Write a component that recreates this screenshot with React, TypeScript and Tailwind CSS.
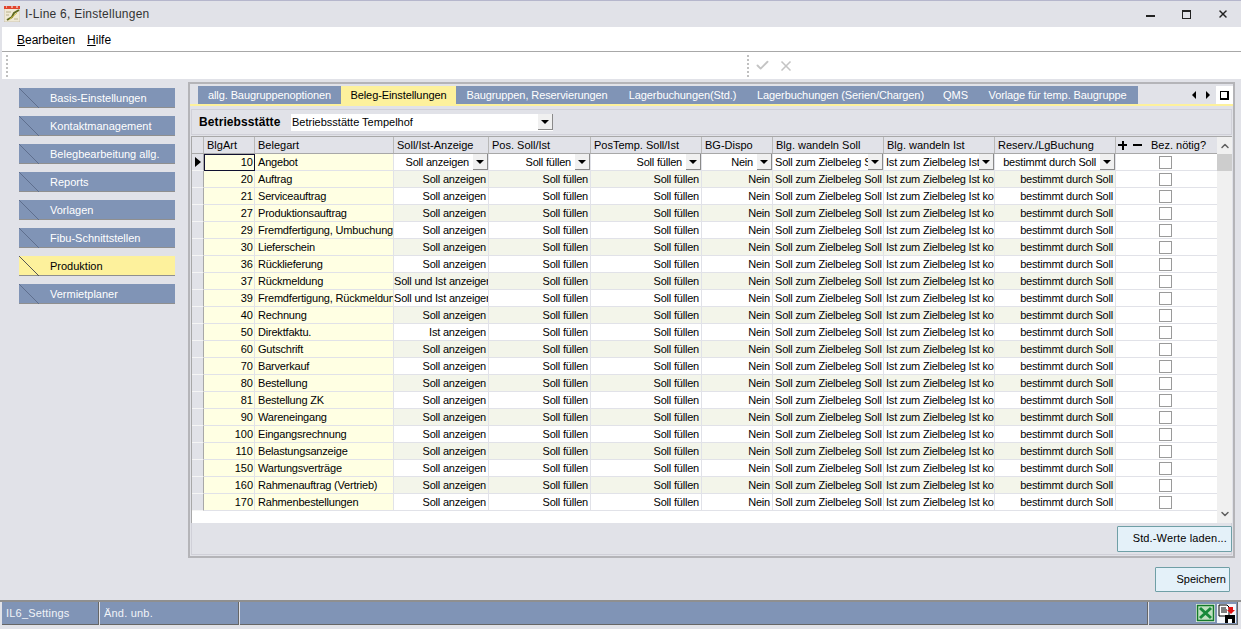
import React from "react";
import { Check, X, ChevronUp, ChevronDown } from "lucide-react";

const sideItems = ["Basis-Einstellungen", "Kontaktmanagement", "Belegbearbeitung allg.", "Reports", "Vorlagen", "Fibu-Schnittstellen", "Produktion", "Vermietplaner"];

const tabs = [
  { label: "allg. Baugruppenoptionen", w: "w-[143px]" },
  { label: "Beleg-Einstellungen", w: "w-[115px]" },
  { label: "Baugruppen, Reservierungen", w: "w-[162px]" },
  { label: "Lagerbuchungen(Std.)", w: "w-[129px]" },
  { label: "Lagerbuchungen (Serien/Chargen)", w: "w-[187px]" },
  { label: "QMS", w: "w-[43px]" },
  { label: "Vorlage für temp. Baugruppe", w: "w-[161px]" },
];

const rows: [number, string, string][] = [
  [10, "Angebot", "Soll anzeigen"],
  [20, "Auftrag", "Soll anzeigen"],
  [21, "Serviceauftrag", "Soll anzeigen"],
  [27, "Produktionsauftrag", "Soll anzeigen"],
  [29, "Fremdfertigung, Umbuchung", "Soll anzeigen"],
  [30, "Lieferschein", "Soll anzeigen"],
  [36, "Rücklieferung", "Soll anzeigen"],
  [37, "Rückmeldung", "Soll und Ist anzeigen"],
  [39, "Fremdfertigung, Rückmeldung", "Soll und Ist anzeigen"],
  [40, "Rechnung", "Soll anzeigen"],
  [50, "Direktfaktu.", "Ist anzeigen"],
  [60, "Gutschrift", "Soll anzeigen"],
  [70, "Barverkauf", "Soll anzeigen"],
  [80, "Bestellung", "Soll anzeigen"],
  [81, "Bestellung ZK", "Soll anzeigen"],
  [90, "Wareneingang", "Soll anzeigen"],
  [100, "Eingangsrechnung", "Soll anzeigen"],
  [110, "Belastungsanzeige", "Soll anzeigen"],
  [150, "Wartungsverträge", "Soll anzeigen"],
  [160, "Rahmenauftrag (Vertrieb)", "Soll anzeigen"],
  [170, "Rahmenbestellungen", "Soll anzeigen"],
];

const headers = [
  { label: "Soll/Ist-Anzeige", w: "w-[95px]" },
  { label: "Pos. Soll/Ist", w: "w-[102px]" },
  { label: "PosTemp. Soll/Ist", w: "w-[111px]" },
  { label: "BG-Dispo", w: "w-[71px]" },
  { label: "Blg. wandeln Soll", w: "w-[111px]" },
  { label: "Blg. wandeln Ist", w: "w-[111px]" },
  { label: "Reserv./LgBuchung", w: "w-[121px]" },
];

function DropBtn() {
  return (
    <span className="w-[15px] h-[16px] shrink-0 bg-[#f0f0f0] border-r border-b border-[#8a8a8a] flex items-center justify-center">
      <span className="w-0 h-0 border-l-[4px] border-r-[4px] border-t-[4px] border-l-transparent border-r-transparent border-t-black" />
    </span>
  );
}

function Cell({ w, text, first, alt, left }: { w: string; text: string; first: boolean; alt: boolean; left?: boolean }) {
  return (
    <div className={`${w} h-full shrink-0 border-r border-b border-[#e1e2e8] flex items-center overflow-hidden ${alt ? "bg-[#f3f5ea]" : "bg-white"}`}>
      <span className={`flex-1 min-w-0 whitespace-nowrap overflow-hidden tracking-[-0.2px] ${left ? "text-left pl-[2px]" : first ? "text-right pr-[4px]" : "text-right pr-[2px]"}`}>{text}</span>
      {first && <DropBtn />}
    </div>
  );
}

export default function App() {
  return (
    <div className="w-[1241px] h-[629px] overflow-hidden flex flex-col bg-[#e1e2e8] text-[11px] leading-none text-black font-['Liberation_Sans',sans-serif]">
      {/* title */}
      <div className="h-[27px] shrink-0 border-t border-[#b5b6cc] flex items-center pl-[4px]">
        <svg width="16" height="16" viewBox="0 0 16 16" className="shrink-0">
          <rect x="0" y="1" width="16" height="15" fill="#efe9d6" stroke="#a8a08c" strokeWidth="0.5" />
          <rect x="0" y="0" width="16" height="3" fill="#e0452e" />
          <path d="M2 1h1M7 1h2M12 1h2" stroke="#fff" />
          <path d="M2 6h5M2 9h3M10 13h4" stroke="#b9b28e" />
          <path d="M3 14 L8 11 L10 7 L15 4" stroke="#5f6b22" strokeWidth="2" fill="none" />
          <path d="M5 14 L13 7" stroke="#d8c24a" strokeWidth="1" fill="none" />
        </svg>
        <span className="ml-[5px] text-[12px] text-[#333] tracking-[0.25px]">I-Line 6, Einstellungen</span>
        <div className="ml-auto flex items-center text-[#222]">
          <span className="w-[9px] h-[2px] mt-[3px] bg-[#222]" />
          <span className="ml-[27px] w-[9px] h-[9px] border border-t-2 border-[#222]" />
          <X size={12} strokeWidth={3} className="ml-[26px] mr-[12px]" />
        </div>
      </div>
      {/* menu */}
      <div className="h-[25px] shrink-0 ml-[2px] pt-[2px] bg-white border-b border-[#a8a8a8] flex items-center pl-[15px] gap-[12px] text-[12px]">
        <span><span className="underline">B</span>earbeiten</span>
        <span><span className="underline">H</span>ilfe</span>
      </div>
      {/* toolbar */}
      <div className="h-[27px] shrink-0 ml-[2px] bg-white flex items-center">
        <span className="ml-[4px] h-[22px] border-l-2 border-dotted border-[#c0c0c0]" />
        <span className="ml-[739px] h-[22px] border-l-2 border-dotted border-[#c0c0c0]" />
        <Check size={15} strokeWidth={3} className="ml-[6px] text-[#c4c4c4]" />
        <X size={16} strokeWidth={2.5} className="ml-[8px] text-[#c4c4c4]" />
      </div>
      {/* body */}
      <div className="flex-1 min-h-0 flex">
        <div className="w-[188px] shrink-0 pl-[19px] pt-[9px] flex flex-col gap-[8px]">
          {sideItems.map((s) => {
            const active = s === "Produktion";
            return (
              <div key={s} className={`relative w-[156px] h-[20px] flex items-center pl-[31px] pt-[1px] border-b border-[#8f8f8f] whitespace-nowrap ${active ? "bg-[#fdf19c] text-black" : "bg-[#8094b6] text-white"}`}>
                <svg width="21" height="20" className="absolute left-0 top-0">
                  <path d="M0 0 L20 20" stroke={active ? "#555" : "#5f6f8e"} />
                </svg>
                {s}
              </div>
            );
          })}
        </div>
        <div className="flex-1 min-w-0 flex flex-col pr-[6px] pt-[3px]">
          <div className="h-[476px] shrink-0 border-2 border-[#b4b4b8] flex flex-col">
            {/* tabs */}
            <div className="h-[20px] mt-[2px] shrink-0 flex pl-[8px] border-b-2 border-[#fdf19c]">
              {tabs.map((t) => (
                <div key={t.label} className={`${t.w} shrink-0 flex items-center justify-center whitespace-nowrap tracking-[-0.1px] ${t.label === "Beleg-Einstellungen" ? "bg-[#fdf19c] text-black" : "bg-[#8094b6] text-white"}`}>
                  {t.label}
                </div>
              ))}
              <div className="ml-auto flex items-center">
                <span className="w-0 h-0 border-y-[4px] border-r-[4px] border-y-transparent border-r-black" />
                <span className="ml-[10px] w-0 h-0 border-y-[4px] border-l-[4px] border-y-transparent border-l-black" />
                <span className="ml-[6px] w-[17px] h-[18px] bg-white flex items-center justify-center">
                  <span className="w-[9px] h-[9px] border border-black border-b-2 border-r-2" />
                </span>
              </div>
            </div>
            {/* filter */}
            <div className="h-[26px] mt-[3px] mx-[1px] shrink-0 border border-[#d0d0d8] flex items-center pl-[7px]">
              <span className="w-[92px] font-bold text-[12px] tracking-[0.1px]">Betriebsstätte</span>
              <div className="w-[262px] h-[17px] bg-white flex items-center justify-between pl-[1px]">
                Betriebsstätte Tempelhof
                <DropBtn />
              </div>
            </div>
            {/* grid */}
            <div className="h-[387px] shrink-0 mt-[1px] mx-[1px] flex flex-col bg-white border-t border-l border-[#a8a8a8]">
              <div className="flex-1 min-h-0 flex">
                <div className="w-[1025px] shrink-0 flex flex-col">
                  <div className="h-[17px] shrink-0 flex bg-[#e1e2e8] border-b border-[#a8a8a8]">
                    <div className="w-[12px] shrink-0 border-r border-[#b8b8b8]" />
                    <div className="w-[51px] shrink-0 pl-[3px] flex items-center border-r border-[#b8b8b8]">BlgArt</div>
                    <div className="w-[139px] shrink-0 pl-[3px] flex items-center border-r border-[#b8b8b8]">Belegart</div>
                    {headers.map((h) => (
                      <div key={h.label} className={`${h.w} shrink-0 pl-[3px] flex items-center border-r border-[#b8b8b8] whitespace-nowrap`}>{h.label}</div>
                    ))}
                    <div className="flex-1 min-w-0 flex items-center pl-[2px]">
                      <span className="relative w-[9px] h-[9px] shrink-0">
                        <span className="absolute left-0 top-[3.5px] w-[9px] h-[2px] bg-black" />
                        <span className="absolute left-[3.5px] top-0 w-[2px] h-[9px] bg-black" />
                      </span>
                      <span className="ml-[6px] w-[9px] h-[2px] shrink-0 bg-black" />
                      <span className="ml-[9px] whitespace-nowrap">Bez. nötig?</span>
                    </div>
                  </div>
                  {rows.map(([no, name, show], i) => {
                    const first = i === 0;
                    const alt = i % 2 === 1;
                    return (
                      <div key={no} className="h-[17px] shrink-0 flex">
                        <div className="w-[12px] shrink-0 bg-[#e1e2e8] border-r border-b border-[#a8a8a8] border-b-[#f5f5f5] flex items-center justify-center">
                          {first && <span className="w-0 h-0 border-y-[5px] border-l-[6px] border-y-transparent border-l-black" />}
                        </div>
                        <div className={`w-[51px] shrink-0 bg-[#ffffe3] flex items-center justify-end pr-[1px] border-r border-b ${first ? "border border-[#101030]" : "border-[#e1e2e8]"}`}>{no}</div>
                        <div className="w-[139px] shrink-0 bg-[#ffffe3] flex items-center pl-[3px] border-r border-b border-[#e1e2e8] whitespace-nowrap overflow-hidden tracking-[-0.2px]">{name}</div>
                        <Cell w="w-[95px]" text={show} first={first} alt={alt} />
                        <Cell w="w-[102px]" text="Soll füllen" first={first} alt={alt} />
                        <Cell w="w-[111px]" text="Soll füllen" first={first} alt={alt} />
                        <Cell w="w-[71px]" text="Nein" first={first} alt={alt} />
                        <Cell w="w-[111px]" text="Soll zum Zielbeleg Soll kopieren" first={first} alt={alt} left />
                        <Cell w="w-[111px]" text="Ist zum Zielbeleg Ist kopieren" first={first} alt={alt} left />
                        <Cell w="w-[121px]" text="bestimmt durch Soll" first={first} alt={alt} />
                        <div className="flex-1 min-w-0 bg-white border-b border-[#e1e2e8] flex items-center justify-center pr-[3px]">
                          <span className="w-[13px] h-[13px] border border-[#9a9a9a] bg-white" />
                        </div>
                      </div>
                    );
                  })}
                </div>
                <div className="w-[15px] shrink-0 bg-[#f0f0f0] flex flex-col items-center">
                  <ChevronUp size={12} strokeWidth={3} className="text-[#606060] mt-[3px]" />
                  <div className="w-[15px] h-[17px] mt-[2px] bg-[#cdcdcd]" />
                  <ChevronDown size={12} strokeWidth={3} className="text-[#606060] mt-auto mb-[3px]" />
                </div>
              </div>
            </div>
            {/* footer of panel */}
            <div className="flex-1 min-h-0 mx-[1px] mb-[1px] border border-t-0 border-[#d0d0d8] flex items-center justify-end">
              <button className="w-[115px] h-[26px] -mr-[1px] bg-[#e4f1f9] border border-[#6f9fa6] rounded-[1px] text-right pr-[4px] tracking-[0.15px]">Std.-Werte laden...</button>
            </div>
          </div>
          <div className="flex-1 min-h-0 flex items-center justify-end pr-[5px]">
            <button className="w-[75px] h-[25px] bg-[#e4f1f9] border border-[#6f9fa6] rounded-[1px] text-right pr-[3px]">Speichern</button>
          </div>
        </div>
      </div>
      {/* status */}
      <div className="h-[29px] shrink-0 border-t-2 border-[#8f8f8f] flex gap-[1px] pl-[2px] pr-[3px] pb-[4px] text-[#f0f3f8]">
        <div className="w-[97px] bg-[#8094b6] border-r border-b border-[#666] flex items-center pl-[4px] tracking-[0.2px]">IL6_Settings</div>
        <div className="w-[139px] bg-[#8094b6] border-r border-b border-[#666] flex items-center pl-[4px] tracking-[0.2px]">Änd. unb.</div>
        <div className="w-[908px] bg-[#8094b6] border-r border-b border-[#666]" />
        <div className="flex-1 bg-[#8094b6] border-r border-b border-[#666] flex items-center justify-end pr-[1px] gap-[2px]">
          <svg width="19" height="18" viewBox="0 0 19 18">
            <rect x="0" y="0" width="19" height="18" fill="#e6eee6" />
            <rect x="1.5" y="1.5" width="16" height="15" fill="#bfe0c0" stroke="#137a2a" strokeWidth="1.5" />
            <path d="M4 4 L15 14 M15 4 L4 14" stroke="#18893a" strokeWidth="3" />
          </svg>
          <svg width="19" height="19" viewBox="0 0 19 19">
            <rect width="19" height="19" fill="#f4f6fa" />
            <path d="M2 1h8l2 2v9H2z" fill="#fff" stroke="#000" />
            <path d="M4 4h5M4 6h6M4 8h6" stroke="#000" />
            <path d="M11 3h5v3h2l-4 4-4-4h2z" fill="#e01010" />
            <path d="M8 11h10v8H8z" fill="#000" />
            <rect x="11" y="15" width="4" height="4" fill="#fff" />
          </svg>
        </div>
      </div>
    </div>
  );
}
